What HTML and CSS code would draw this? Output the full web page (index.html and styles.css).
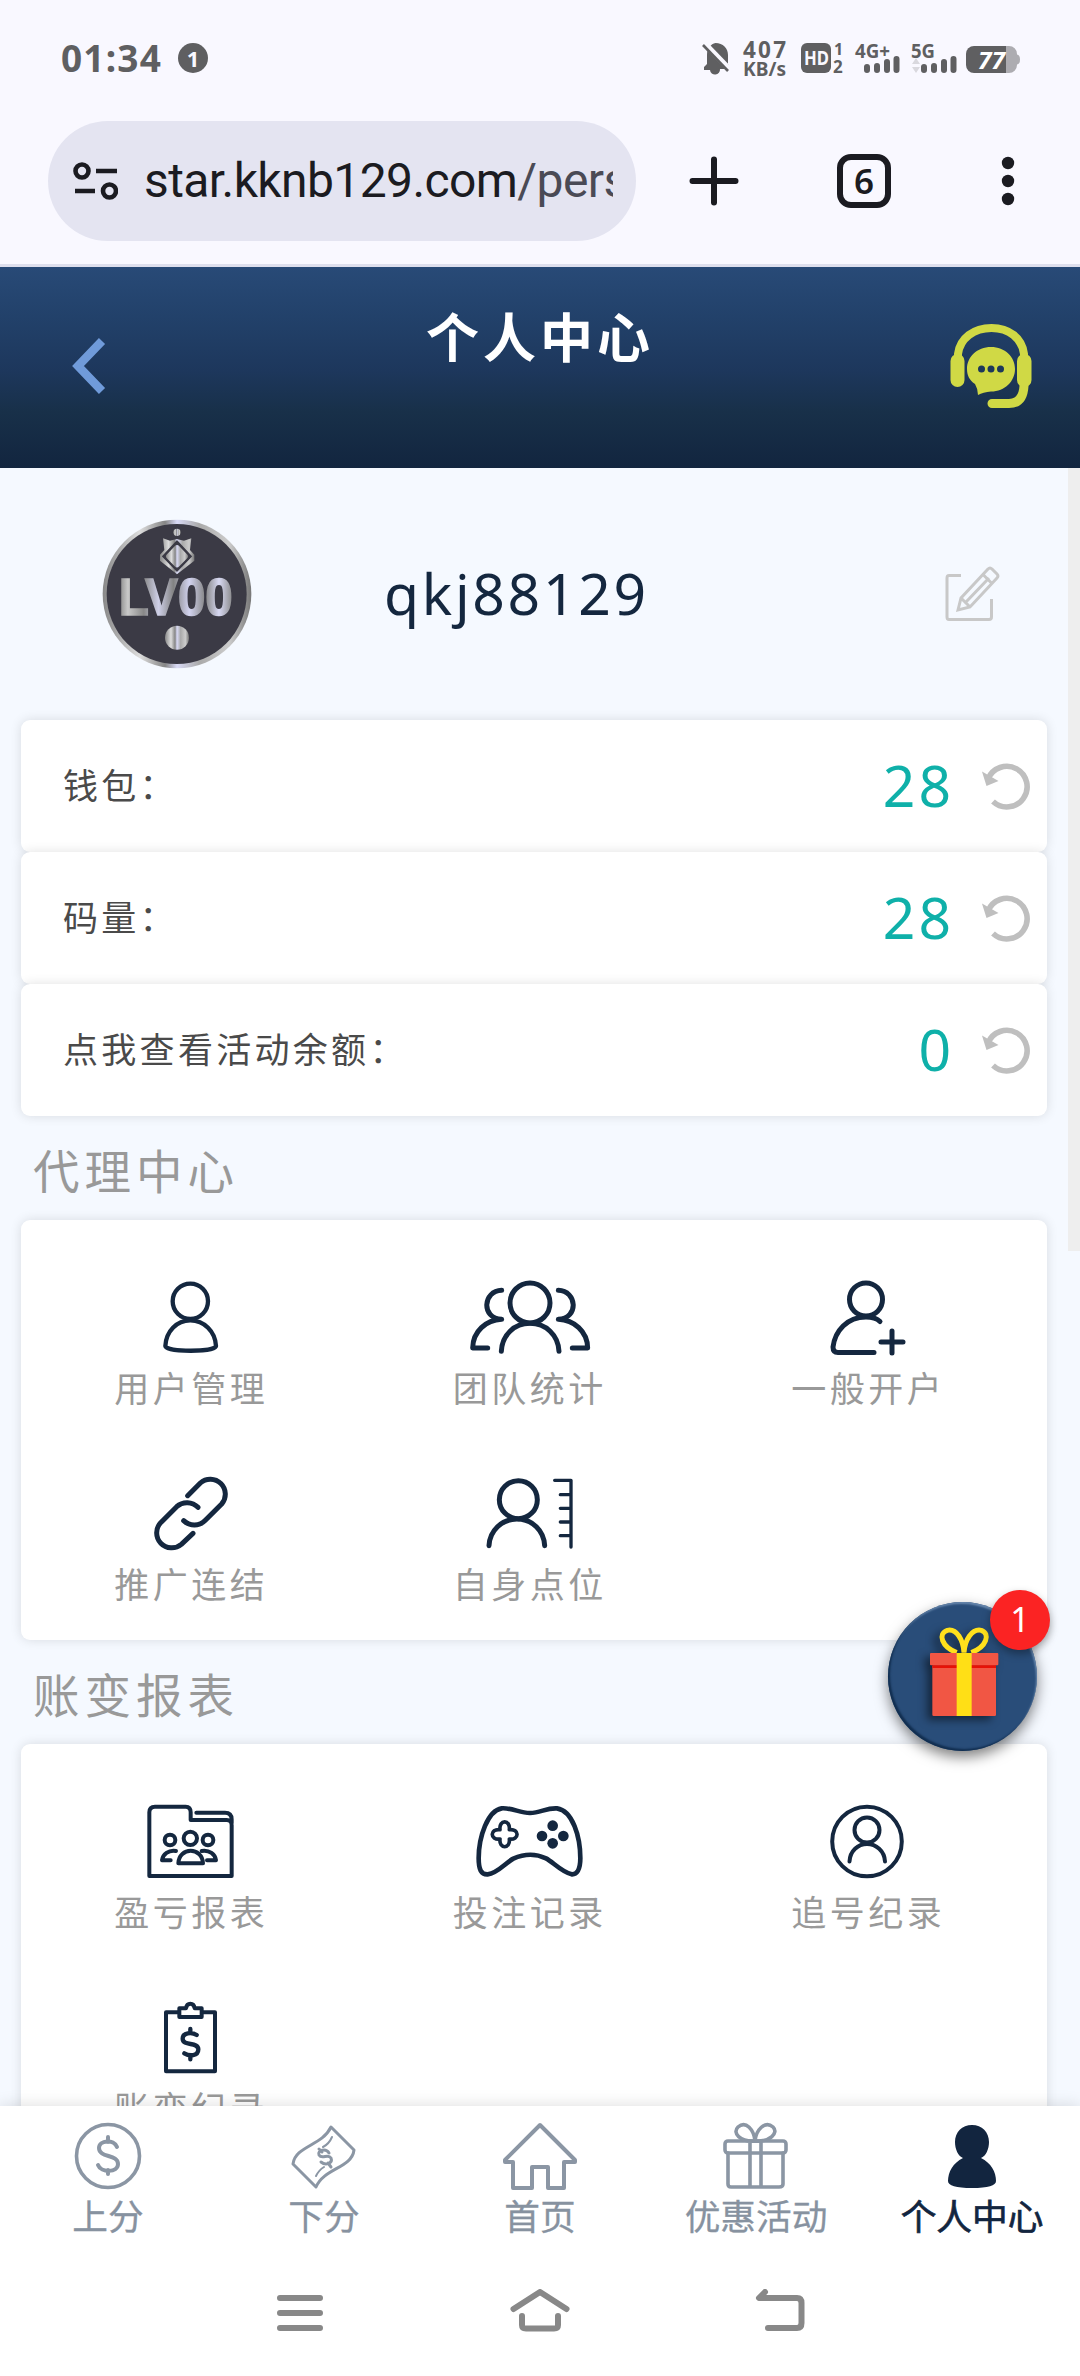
FILE: index.html
```html
<!DOCTYPE html>
<html lang="zh-CN">
<head>
<meta charset="utf-8">
<title>个人中心</title>
<link rel="stylesheet" href="styles.css">
</head>
<body>
<div class="status">
  <span class="clock">01:34</span>
  <span class="notice">1</span>
  <svg class="status-icons" width="330" height="40" viewBox="0 0 330 40" fill="#5f5f61">
    <path d="M4 30 V27 L7 24 V15 C7 8 11 4 15.5 3 C23 3 28 8 28 15 V24 L31 29 H20 A5 5 0 0 1 10 30Z"/>
    <path d="M4 3 L31 31" stroke="#f9f8ff" stroke-width="6"/>
    <path d="M3 5 L28 31" stroke="#5f5f61" stroke-width="2.6"/>
    <text x="43" y="17.500" class="st-b" font-size="22.500" textLength="43">407</text>
    <text x="43" y="36" class="st-b" font-size="19.500" textLength="43" lengthAdjust="spacingAndGlyphs">KB/s</text>
    <rect x="101" y="3" width="30" height="30" rx="6"/>
    <text x="104" y="25" class="st-b" font-size="19" fill="#f9f8ff" textLength="25" lengthAdjust="spacingAndGlyphs">HD</text>
    <text x="134" y="15" class="st-b" font-size="16">1</text>
    <text x="133" y="33" class="st-b" font-size="17">2</text>
    <text x="155" y="17.500" class="st-b" font-size="20" textLength="35" lengthAdjust="spacingAndGlyphs">4G+</text>
    <path d="M167 27V30M177 26V30M187 22V30M196.500 19V30" stroke="#5f5f61" stroke-width="6" stroke-linecap="round"/>
    <text x="211" y="17.500" class="st-b" font-size="20" textLength="24" lengthAdjust="spacingAndGlyphs">5G</text>
    <path d="M216 18L220 24H212ZM216 33L220 27H212Z" fill="#d9d8de"/>
    <path d="M224 27V30M234 26V30M244 22V30M253.500 19V30" stroke="#5f5f61" stroke-width="6" stroke-linecap="round"/>
    <path d="M306 6H309A8 8 0 0 1 317 14V25A8 8 0 0 1 309 33H306ZM317 14.500Q320 15 320 19.500T317 24.500Z" fill="#adacb1"/>
    <path d="M274 6H306V33H274A8 8 0 0 1 266 25V14A8 8 0 0 1 274 6Z"/>
    <text x="278" y="28.500" class="st-b" font-size="24" font-style="italic" fill="#fff" textLength="27" lengthAdjust="spacingAndGlyphs">77</text>
  </svg>
</div>

<div class="browser">
  <div class="omnibox">
    <svg width="46" height="40" viewBox="0 0 46 40" fill="none" stroke="#1b1b21" stroke-width="4.600"><circle cx="10" cy="10" r="6.500"/><path d="M24 10H45M3 30H23"/><circle cx="37.500" cy="30" r="6.500"/></svg>
    <div class="url">star.kknb129.com<span>/personal</span></div>
  </div>
  <svg class="tool-plus" width="50" height="50" viewBox="0 0 50 50"><path d="M25 3.500V46.500M3.500 25H46.500" stroke="#1b1b21" stroke-width="6" stroke-linecap="round"/></svg>
  <div class="tabs">6</div>
  <svg class="tool-dots" width="14" height="50" viewBox="0 0 14 50" fill="#1b1b21"><circle cx="7" cy="7" r="6.200"/><circle cx="7" cy="25" r="6.200"/><circle cx="7" cy="43" r="6.200"/></svg>
</div>

<header class="header">
  <svg class="back" width="40" height="64" viewBox="0 0 40 64"><path d="M32 7L8 32L32 57" fill="none" stroke="#709bda" stroke-width="8.500"/></svg>
  <h1>个人中心</h1>
  <svg class="service" width="90" height="92" viewBox="0 0 90 92" fill="#d0d945">
    <path d="M12 38V34C14 18 28 8 45.500 8S76 18 78 34V38" fill="none" stroke="#d0d945" stroke-width="8"/>
    <rect x="4.500" y="34" width="14" height="33" rx="7"/>
    <rect x="71" y="34" width="14.500" height="33" rx="7"/>
    <path d="M78 60V66Q77 83.500 63 83.500H46" fill="none" stroke="#d0d945" stroke-width="9" stroke-linecap="round"/>
    <path d="M45 27C59 27 69 37 69 49S59 71.500 45 71.500Q37 72 32 75Q32 69 29 64C23 60 21 55 21 49C21 37 31 27 45 27Z"/>
    <g fill="#1d385a"><circle cx="35.500" cy="49" r="3.500"/><circle cx="45" cy="49" r="3.500"/><circle cx="54.500" cy="49" r="3.500"/></g>
  </svg>
</header>

<main class="content">
  <div class="page">
    <section class="profile">
      <svg class="avatar" width="150" height="150" viewBox="66 56 450 450">
        <defs>
          <linearGradient id="metal"><stop offset="0" stop-color="#888"/><stop offset=".25" stop-color="#ddd"/><stop offset=".42" stop-color="#858585"/><stop offset=".5" stop-color="#d9daf6"/><stop offset=".65" stop-color="#aaa"/><stop offset=".85" stop-color="#ccc"/><stop offset="1" stop-color="#777"/></linearGradient>
          <linearGradient id="letters"><stop offset="0" stop-color="#858585"/><stop offset=".08" stop-color="#c9c9c9"/><stop offset=".22" stop-color="#888"/><stop offset=".35" stop-color="#cfd0e8"/><stop offset=".48" stop-color="#828282"/><stop offset=".62" stop-color="#d2d3ef"/><stop offset=".76" stop-color="#858585"/><stop offset=".88" stop-color="#d8d9f3"/><stop offset="1" stop-color="#888"/></linearGradient>
        </defs>
        <circle cx="291" cy="281" r="223" fill="url(#metal)"/>
        <circle cx="290" cy="281" r="210" fill="#3b3a45"/>
        <g fill="url(#metal)">
          <circle cx="291" cy="96" r="11"/>
          <path d="M249 114L270 121L290 116L312 121L334 114L330 149L343 163V181L291 222L240 181V163L253 149Z"/>
          <circle cx="291" cy="412" r="36"/>
        </g>
        <path d="M291 122L334 168L291 212L248 168Z" fill="#3b3a45" stroke="#3b3a45" stroke-width="4" stroke-linejoin="round"/>
        <path d="M291 134Q295 134 298 138L323 164Q326 168 323 172L298 198Q291 205 284 198L259 172Q256 168 259 164L284 138Q287 134 291 134Z" fill="url(#metal)"/>
        <text x="116" y="343" class="logo-text" font-size="158" fill="url(#letters)" stroke="url(#letters)" stroke-width="5" textLength="342" lengthAdjust="spacingAndGlyphs">LV00</text>
      </svg>
      <span class="username">qkj88129</span>
      <svg class="edit" width="58" height="58" viewBox="0 0 58 58" fill="none" stroke="#c8c8c8" stroke-width="3"><path d="M18 10.500H6Q4 10.500 4 13V52Q4 54.500 6 54.500H46Q48.500 54.500 48.500 52V34"/><path d="M15 45L18 33L45 4Q47 2 49 4L54 9Q56 11 54 13L27 42ZM18 33L27 42M40 9.500L49 18.500M23 37L46 13"/></svg>
    </section>

    <div class="balance"><span class="name">钱包：</span><span class="amount">28</span><svg class="reload" width="52" height="48" viewBox="0 0 52 48"><path d="M8 17A20.300 20.300 0 1 1 13 39.500" fill="none" stroke="#bfbfbf" stroke-width="5.600"/><path d="M2 9.500L18.500 19L6.500 24Z" fill="#bfbfbf"/></svg></div>
    <div class="balance"><span class="name">码量：</span><span class="amount">28</span><svg class="reload" width="52" height="48" viewBox="0 0 52 48"><path d="M8 17A20.300 20.300 0 1 1 13 39.500" fill="none" stroke="#bfbfbf" stroke-width="5.600"/><path d="M2 9.500L18.500 19L6.500 24Z" fill="#bfbfbf"/></svg></div>
    <div class="balance"><span class="name">点我查看活动余额：</span><span class="amount">0</span><svg class="reload" width="52" height="48" viewBox="0 0 52 48"><path d="M8 17A20.300 20.300 0 1 1 13 39.500" fill="none" stroke="#bfbfbf" stroke-width="5.600"/><path d="M2 9.500L18.500 19L6.500 24Z" fill="#bfbfbf"/></svg></div>

    <h2>代理中心</h2>
    <section class="grid">
      <div class="item">
        <svg class="icon" viewBox="30 57 420 234" stroke-width="13"><circle cx="241" cy="124" r="53"/><path d="M166 258C168 214 200 181 241 181S316 214 318 258C318 277 166 277 166 258Z"/></svg>
        <span>用户管理</span>
      </div>
      <div class="item">
        <svg class="icon" viewBox="1044 57 420 234" stroke-width="15"><circle cx="1257" cy="129" r="60"/><path d="M1171 274C1173 225 1210 190 1257 190S1342 225 1344 274"/><path d="M1172 91C1116 92 1109 175 1172 178C1125 180 1086 214 1085 264H1130M1342 91C1398 92 1405 175 1342 178C1389 180 1429 214 1430 264H1384"/></svg>
        <span>团队统计</span>
      </div>
      <div class="item">
        <svg class="icon" viewBox="0 0 140 78" stroke-width="5"><circle cx="69" cy="20.500" r="16.500"/><path d="M83 42.500C80 39.500 75 38 69 38C50 38 38 52 36 68Q36 73.500 41 73.500H77M95 52V74M84 63H106"/></svg>
        <span>一般开户</span>
      </div>
      <div class="item">
        <svg class="icon" viewBox="30 645 420 234" stroke-width="15"><path d="M233 707L271 669A45 45 0 0 1 335 732L286 781A46 46 0 0 1 221 782M249 820L214 853A45 45 0 0 1 152 788L200 740A46 46 0 0 1 264 742"/></svg>
        <span>推广连结</span>
      </div>
      <div class="item">
        <svg class="icon" viewBox="1044 645 420 234" stroke-width="15"><circle cx="1222" cy="719" r="57"/><path d="M1134 857C1136 812 1172 777 1218 777S1299 812 1301 857"/><path stroke-width="10" d="M1331 661H1380V861M1348 704H1380M1348 745H1380M1348 786H1380M1348 827H1380"/></svg>
        <span>自身点位</span>
      </div>
    </section>

    <h2>账变报表</h2>
    <section class="grid">
      <div class="item">
        <svg class="icon" viewBox="30 69 420 234" stroke-width="12"><path d="M118 288V97Q118 80 135 80H227Q242 80 242 97V120H350Q365 120 365 136V288ZM259 98H345Q365 98 365 118V130"/><circle cx="180" cy="180" r="16"/><circle cx="294" cy="180" r="16"/><circle cx="241" cy="175" r="20"/><path d="M205 250C207 200 277 200 279 250ZM198 213C176 209 158 223 156 241H182M275 213C298 209 316 223 318 241H291"/></svg>
        <span>盈亏报表</span>
      </div>
      <div class="item">
        <svg class="icon" viewBox="1044 69 420 234" stroke-width="14"><path d="M1172 85C1205 83 1225 99 1257 99S1305 83 1338 85C1385 92 1408 170 1408 235C1408 270 1397 284 1382 283C1350 275 1325 245 1305 235C1275 221 1240 221 1207 236C1185 247 1160 280 1130 283C1110 284 1103 268 1103 235C1103 170 1130 92 1172 85Z"/><path stroke-width="11" d="M1167 149C1163 118 1199 118 1195 149C1226 145 1226 181 1195 177C1199 208 1163 208 1167 177C1136 181 1136 145 1167 149Z"/><g fill="#14273f" stroke="none"><circle cx="1325" cy="137" r="16"/><circle cx="1325" cy="190" r="16"/><circle cx="1293" cy="168" r="16"/><circle cx="1357" cy="168" r="16"/></g></svg>
        <span>投注记录</span>
      </div>
      <div class="item">
        <svg class="icon" viewBox="0 0 140 78" stroke-width="4"><circle cx="70" cy="38.500" r="34.800"/><circle cx="70" cy="27" r="12.500"/><path d="M52.500 58.500C53 48 61 41 70 41S87.500 48 88 58.500"/></svg>
        <span>追号纪录</span>
      </div>
      <div class="item">
        <svg class="icon" viewBox="30 657 420 234" stroke-width="12"><path d="M208 697H168V874H315V697H275M208 685H228Q230 671 241 671T254 685H275V711H208Z"/><path stroke-width="13" d="M260 765C245 755 218 758 218 776C218 800 265 784 265 808C265 829 238 829 223 820M241 747V757M241 827V838"/></svg>
        <span>账变纪录</span>
      </div>
    </section>
  </div>
  <div class="scrollbar"></div>
</main>

<nav class="tabbar">
  <div class="tab">
    <svg class="tab-icon" viewBox="0 0 76 68"><circle cx="38" cy="34" r="31.500"/><path d="M47 25C44 17 29 18 29 26C29 36 48 32 48 42C48 51 31 51 28 43M38 15V20M38 48V52" stroke-width="4"/></svg>
    <span>上分</span>
  </div>
  <div class="tab">
    <svg class="tab-icon" viewBox="0 0 76 68"><path stroke-width="3" d="M45 5L68 28C66 46 38 46 30 65L7 42C9 24 36 24 45 5Z"/><path stroke-width="2" d="M46 15Q43 22 37 25M30 54Q33 48 38 45"/><path stroke-width="3" d="M43 31C40 26 31 28 33 33C36 38 42 31 45 36C47 41 40 44 35 40M33 27L36 30M42 41L45 45"/></svg>
    <span>下分</span>
  </div>
  <div class="tab">
    <svg class="tab-icon" viewBox="0 0 76 68"><path d="M38 3L3 38V40H11V66H30V45H46V66H62V40H73V38Z" stroke-width="4"/></svg>
    <span>首页</span>
  </div>
  <div class="tab">
    <svg class="tab-icon" viewBox="0 0 76 68"><rect x="7" y="19" width="61" height="12" rx="3"/><path d="M10 31V62Q10 65 13 65H61Q65 65 65 62V31M32 19V65M43 19V65M37 19C22 20 14 11 20 5C28 -2 36 8 37 19C38 8 47 -2 55 5C61 11 52 20 37 19"/></svg>
    <span>优惠活动</span>
  </div>
  <div class="tab active">
    <svg class="tab-icon" viewBox="0 0 76 68"><path fill="#12253f" stroke="none" d="M38 3C48 3 55 10 55 20C55 27 52 34 47 36C57 41 62 50 62 59Q62 66 38 66T14 59C14 50 19 41 29 36C24 34 21 27 21 20C21 10 28 3 38 3Z"/></svg>
    <span>个人中心</span>
  </div>
</nav>

<div class="sysnav">
  <svg width="60" height="48" viewBox="0 0 60 48"><path d="M10 9H50M10 24H50M10 39H50" /></svg>
  <svg width="60" height="48" viewBox="0 0 60 48"><path d="M3.500 20L30 3L56.500 20M12 27V36Q12 39.500 16 39.500H44Q48 39.500 48 36V27" /></svg>
  <svg width="60" height="48" viewBox="0 0 60 48"><path d="M15 3L9 9H47Q51.500 9 51.500 14V34Q51.500 39 47 39H18" /></svg>
</div>

<div class="gift">
  <svg width="90" height="100" viewBox="195 105 270 300">
    <g fill="none" stroke="#ffe11c" stroke-width="15"><path d="M312 188C310 150 290 115 262 121C232 131 245 170 290 188M312 188C314 150 336 115 364 121C392 131 380 170 334 188"/></g>
    <rect x="217" y="226" width="191" height="152" rx="4" fill="#f15644"/>
    <rect x="210" y="189" width="205" height="37" rx="3" fill="#f15644"/>
    <path d="M217 226H408V234H217Z" fill="#e61207"/>
    <path d="M290 189H335V378H290Z" fill="#ffdf16"/>
  </svg>
  <span class="badge">1</span>
</div>
</body>
</html>
```
FILE: styles.css
```css
* { box-sizing: border-box; }
html, body { margin: 0; }
body {
  position: relative;
  width: 1080px;
  height: 2376px;
  overflow: hidden;
  display: flex;
  flex-direction: column;
  background: #fff;
  font-family: "Noto Sans", "Noto Sans CJK SC", sans-serif;
}
svg { display: block; flex: none; }

.status {
  height: 116px;
  flex: none;
  display: flex;
  align-items: center;
  padding: 0 50px 0 61px;
  background: #f9f8ff;
  color: #5f5f61;
}
.clock { width: 117px; font-size: 37px; font-weight: 700; letter-spacing: 1.2px; line-height: 40px; }
.notice {
  width: 30px;
  height: 30px;
  border-radius: 50%;
  background: #5f5f61;
  color: #f9f8ff;
  font-size: 22px;
  font-weight: 700;
  line-height: 30px;
  text-align: center;
}
.status-icons { margin-left: auto; margin-top: 4px; overflow: visible; }
.st-b { font-family: "Noto Sans", sans-serif; font-weight: 700; }

.browser {
  height: 151px;
  flex: none;
  display: flex;
  align-items: center;
  padding: 0 65px 19px 48px;
  background: #f9f8ff;
  border-bottom: 3px solid #dedfed;
}
.omnibox {
  width: 588px;
  height: 120px;
  border-radius: 60px;
  background: #e4e4f1;
  display: flex;
  align-items: center;
  padding: 0 23px 0 24px;
}
.url {
  flex: 1;
  margin-left: 26px;
  overflow: hidden;
  white-space: nowrap;
  font-family: Roboto, sans-serif;
  font-size: 48px;
  line-height: 64px;
  letter-spacing: -.6px;
  color: #1b1b21;
}
.url span { color: #4a4a55; }
.tool-plus { margin-left: 53px; }
.tabs {
  width: 54px;
  height: 54px;
  margin-left: 98px;
  border: 6px solid #1b1b21;
  border-radius: 14px;
  font-size: 35px;
  font-weight: 600;
  line-height: 41px;
  text-align: center;
  color: #1b1b21;
}
.tool-dots { margin-left: auto; }

.header {
  height: 201px;
  flex: none;
  display: flex;
  justify-content: space-between;
  padding: 0 44px 0 70px;
  background: linear-gradient(#284a77 0, #22416a 25%, #1d375c 52%, #183049 72%, #12253f 100%);
}
.back { margin-top: 67px; }
.service { margin-top: 53px; }
h1 {
  margin: 32px 0 0 24px;
  font-size: 53px;
  font-weight: 700;
  line-height: 72px;
  letter-spacing: 4px;
  color: #fff;
  font-family: "Noto Sans CJK SC", sans-serif;
}

.content { flex: none; height: 1638px; display: flex; overflow: hidden; background: #f5f9ff; }
.page { width: 1068px; padding: 0 21px; flex: none; }
.scrollbar { width: 12px; height: 783px; background: #eee; }

.profile { height: 252px; display: flex; align-items: center; padding: 0 46px 0 81px; }
.username { margin: -2px 0 0 132px; font-size: 57px; line-height: 80px; letter-spacing: 2.7px; color: #14273f; }
.edit { margin-left: auto; }

.balance {
  height: 132px;
  display: flex;
  align-items: center;
  padding: 0 15px 0 42px;
  border-radius: 9px;
  background: #fff;
  box-shadow: 0 0 12px rgba(0, 0, 0, .12);
}
.name { flex: 1; margin-top: -5px; font-size: 35px; letter-spacing: 3.3px; color: #4a4a4a; }
.amount { margin-top: -2px; font-size: 57px; line-height: 80px; letter-spacing: 3px; color: #0fb0a9; }
.reload { margin: -1px 0 0 26px; }

h2 {
  margin: 0;
  height: 104px;
  padding: 3px 0 0 12px;
  font-size: 46.5px;
  font-weight: 400;
  line-height: 104px;
  letter-spacing: 5px;
  color: #999;
}
.grid {
  height: 420px;
  display: grid;
  grid-template-columns: repeat(3, 338.5px);
  grid-auto-rows: 131px;
  row-gap: 65px;
  padding-top: 59px;
  border-radius: 9px;
  background: #fff;
  box-shadow: 0 0 12px rgba(0, 0, 0, .12);
}
.item { display: flex; flex-direction: column; align-items: center; gap: 10px; }
.item span { padding-left: 2px; font-size: 35px; line-height: 44px; letter-spacing: 3.5px; color: #999; }
.icon {
  width: 140px;
  height: 78px;
  fill: none;
  stroke: #14273f;
  stroke-linecap: round;
  stroke-linejoin: round;
}

.tabbar {
  position: relative;
  flex: none;
  height: 144px;
  display: grid;
  grid-template-columns: repeat(5, 1fr);
  padding-top: 16px;
  background: #fff;
  box-shadow: 0 0 16px rgba(0, 0, 0, .14);
}
.tab { display: flex; flex-direction: column; align-items: center; gap: 3px; color: #8792a0; }
.tab span { font-size: 35.7px; line-height: 46px; -webkit-text-stroke: .3px currentColor; }
.tab-icon { width: 76px; height: 68px; fill: none; stroke: #8b96a4; stroke-width: 3.6; stroke-linecap: round; stroke-linejoin: round; }
.tab.active { color: #12253f; }
.tab.active span { -webkit-text-stroke-width: .7px; }

.sysnav {
  position: relative;
  flex: 1;
  display: flex;
  justify-content: center;
  gap: 180px;
  padding-top: 39px;
  background: #fff;
}
.sysnav svg { fill: none; stroke: #888; stroke-width: 6; stroke-linecap: round; stroke-linejoin: round; }

.gift {
  position: absolute;
  left: 888px;
  top: 1602px;
  width: 149px;
  height: 149px;
  border-radius: 50%;
  background: #294d79;
  box-shadow: 0 6px 14px rgba(0, 0, 0, .5), inset 2px -2px 2px #112e50, inset -1px 2px 2px #6787ad;
}
.gift svg { margin: 23px 0 0 37px; filter: drop-shadow(-5px 4px 4px rgba(0, 0, 0, .5)); }
.badge {
  position: absolute;
  left: 102px;
  top: -12px;
  width: 60px;
  height: 60px;
  border-radius: 50%;
  background: #fb2323;
  box-shadow: 0 4px 8px rgba(0, 0, 0, .35);
  color: #fff;
  font-size: 34px;
  line-height: 58px;
  text-align: center;
}
.logo-text { font-family: "Liberation Sans", sans-serif; font-weight: 700; }
```
